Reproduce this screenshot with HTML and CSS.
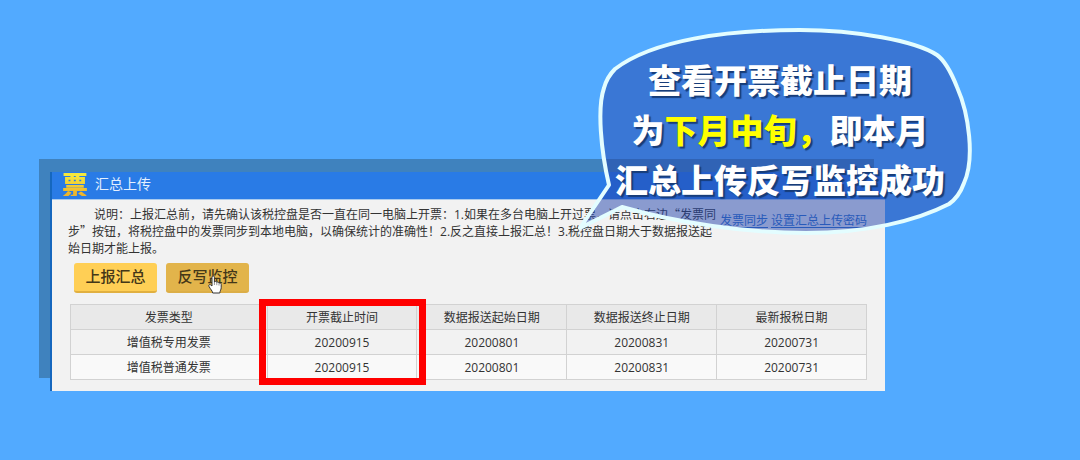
FILE: index.html
```html
<!DOCTYPE html>
<html lang="zh-CN">
<head>
<meta charset="utf-8">
<title>汇总上传</title>
<link rel="stylesheet" href="styles.css">
</head>
<body>
<main class="scene">
  <section class="panel">
    <header class="panel-header">
      <span class="logo">票</span>
      <h1 class="title">汇总上传</h1>
    </header>
    <div class="panel-body">
      <div class="intro">
        <p class="description">说明：上报汇总前，请先确认该税控盘是否一直在同一电脑上开票：1.如果在多台电脑上开过票，请点击右边<span class="quote">“</span>发票同<br>步<span class="quote">”</span>按钮，将税控盘中的发票同步到本地电脑，以确保统计的准确性！2.反之直接上报汇总！3.税控盘日期大于数据报送起<br>始日期才能上报。</p>
        <nav class="links"><a href="#">发票同步</a><a href="#">设置汇总上传密码</a></nav>
      </div>
      <div class="actions">
        <button class="button" type="button">上报汇总</button>
        <button class="button button-hover" type="button">反写监控
          <svg class="pointer" viewBox="0 0 14 19" aria-hidden="true"><path d="M4 11V2.2C4 .4 6.4.4 6.4 2.2V7C7 6 8.6 6.2 8.8 7.4C9.5 6.6 10.9 7 11 8.2C11.8 7.6 13.2 8 13.2 9.4V12.8C13.2 14.7 12 15.6 11.8 18H4.7C4.5 15.8 2.3 14.2 1 11.4C.2 9.7 2 9 2.8 10Z" fill="#fff" stroke="#333" stroke-width="1"/><path d="M6.4 7V10M8.8 7.5V10.2M11 8.3V10.6" stroke="#666" stroke-width=".7"/></svg>
        </button>
      </div>
      <table class="records">
        <thead>
          <tr><th class="type">发票类型</th><th class="marked">开票截止时间</th><th>数据报送起始日期</th><th>数据报送终止日期</th><th>最新报税日期</th></tr>
        </thead>
        <tbody>
          <tr><td>增值税专用发票</td><td>20200915</td><td>20200801</td><td>20200831</td><td>20200731</td></tr>
          <tr><td>增值税普通发票</td><td>20200915</td><td>20200801</td><td>20200831</td><td>20200731</td></tr>
        </tbody>
      </table>
    </div>
    <aside class="bubble">
      <svg class="bubble-shape" viewBox="0 0 400 212" aria-hidden="true"><path d="M33 159C25 125 21 82 28 62Q31 51 39 43C77 14 150 4 224 4C280 4 340 15 361 29Q371 36 381 61C393 88 399 133 388 157Q383 171 373 178C340 195 290 207 230 207C170 207 102 197 46 181L4 202Z"/></svg>
      <p class="bubble-text">查看开票截止日期<br>为<em class="accent">下月中旬，</em>即本月<br>汇总上传反写监控成功</p>
    </aside>
  </section>
</main>
</body>
</html>
```
FILE: styles.css
```css
* { box-sizing: border-box; }

body {
  margin: 0;
  background: #52aaff;
  color: #333;
  font: 12px/17px "Open Sans", "Noto Sans CJK SC", sans-serif;
}

p, h1 { margin: 0; }

.scene { padding: 172px 195px 70px 50px; }

.panel {
  position: relative;
  background: #f2f2f2;
  border-left: 2px solid #1567be;
  box-shadow: -11px -13px 0 #3f82be;
}

.panel-header {
  display: flex;
  align-items: flex-start;
  gap: 7px;
  height: 28px;
  padding-left: 10px;
  background: #297be6;
  border-bottom: 1px solid #a9cbef;
}

.logo {
  font: 900 26px/24px "Noto Sans CJK SC", sans-serif;
  color: transparent;
  background: linear-gradient(#f6e83c 15%, #eeb52b 90%);
  background-clip: text;
  -webkit-background-clip: text;
}

.title {
  color: #e4f0ff;
  font-size: 14px;
  font-weight: 400;
  line-height: 24px;
}

.panel-body { padding: 6px 18px 11px 16px; }

.intro {
  display: flex;
  justify-content: space-between;
}

.description {
  flex: 1 0 auto;
  text-indent: 26px;
  white-space: nowrap;
}

.quote {
  font-family: "Noto Sans CJK SC", sans-serif;
  line-height: 0;
}

.links {
  display: flex;
  gap: 3px;
  padding-top: 6px;
  white-space: nowrap;
}

.links a {
  color: #2f70c8;
  text-decoration: underline;
  text-underline-offset: 2px;
}

.actions {
  display: flex;
  gap: 9px;
  padding: 6px 0 11px 6px;
}

.button {
  position: relative;
  width: 83px;
  height: 30px;
  padding: 0 0 2px;
  border: 0;
  border-bottom: 2px solid #e1b040;
  border-radius: 3px;
  background: #ffcf55;
  color: #443718;
  font: 500 15px/24px "Noto Sans CJK SC", sans-serif;
}

.button-hover {
  background: #e2b44b;
  border-bottom-color: #dcae47;
}

.pointer {
  position: absolute;
  left: 42px;
  top: 12px;
  width: 14px;
  height: 19px;
}

.records {
  width: calc(100% - 2px);
  margin-left: 2px;
  border-collapse: collapse;
  table-layout: fixed;
  text-align: center;
}

.records th,
.records td {
  height: 25px;
  padding: 0;
  border: 1px solid #d2d2d2;
  font-weight: 400;
}

.records th { background: #e9e9e9; }
.records tbody tr:last-child { background: #f9f9f9; }
.records .type { width: 24.7%; }

.marked { position: relative; }

.marked::after {
  content: "";
  position: absolute;
  inset: -6px -10px -56px -9px;
  border: 7px solid #f00;
}

.bubble {
  position: absolute;
  top: -146px;
  right: -91px;
  width: 400px;
  height: 212px;
}

.bubble-shape {
  position: absolute;
  inset: 0;
  fill: rgba(34, 68, 172, .5);
  stroke: #e3fdff;
  stroke-width: 4px;
  stroke-linejoin: round;
}

.bubble-text {
  position: relative;
  padding: 28px 0 0 8px;
  color: #fff;
  font: 900 33px/50px "Noto Sans CJK SC", sans-serif;
  text-align: center;
  white-space: nowrap;
  text-shadow: 2px 2px 1px #173c78;
}

.accent {
  color: #ff0;
  font-style: normal;
}
```
